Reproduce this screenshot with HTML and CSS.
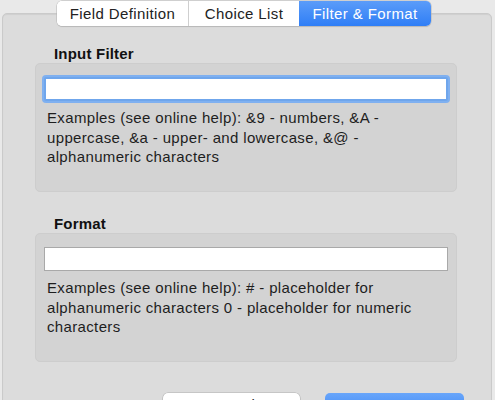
FILE: index.html
```html
<!DOCTYPE html>
<html>
<head>
<meta charset="utf-8">
<link rel="stylesheet" href="styles.css">
</head>
<body>
<div class="window">
  <div class="tabs">
    <div class="tab tab-first">Field Definition</div>
    <div class="tab tab-mid">Choice List</div>
    <div class="tab tab-last tab-active">Filter &amp; Format</div>
  </div>
  <div class="panel">
    <div class="heading">Input Filter</div>
    <div class="group">
      <div class="field field-focus"></div>
      <p class="help">Examples (see online help): &amp;9 - numbers, &amp;A - uppercase, &amp;a - upper- and lowercase, &amp;@ - alphanumeric characters</p>
    </div>
    <div class="heading heading-second">Format</div>
    <div class="group">
      <div class="field"></div>
      <p class="help">Examples (see online help): # - placeholder for alphanumeric characters 0 - placeholder for numeric characters</p>
    </div>
    <div class="buttons">
      <div class="btn btn-cancel">Cancel</div>
      <div class="btn btn-ok">OK</div>
    </div>
  </div>
</div>
</body>
</html>
```

FILE: styles.css
```css
html, body {
  margin: 0;
  padding: 0;
  background: #e9e9e9;
  overflow: hidden;
}
body {
  width: 495px;
  height: 400px;
  font-family: "Liberation Sans", Arial, sans-serif;
  color: #1e1e1e;
}
.window {
  display: flex;
  flex-direction: column;
  padding-top: 1px;
}
.tabs {
  display: flex;
  margin-left: 57px;
  width: 374px;
  height: 25px;
  position: relative;
  z-index: 2;
  border-radius: 5px;
  box-shadow: 0 0 0 0.5px #b5b5b5, 0 1px 1px rgba(0,0,0,0.15);
  overflow: hidden;
  background: #fff;
}
.tab {
  display: flex;
  align-items: center;
  justify-content: center;
  font-size: 15px;
  letter-spacing: 0.4px;
  color: #222;
  background: #fff;
  box-sizing: border-box;
}
.tab-first { width: 132px; border-right: 1px solid #cfcfcf; }
.tab-mid { width: 110px; }
.tab-last { width: 132px; }
.tab-active {
  background: linear-gradient(#5b9cf9, #2f7ef6);
  color: #fff;
}
.panel {
  margin-top: -13px;
  margin-left: 2px;
  width: 490px;
  height: 420px;
  box-sizing: border-box;
  background: #dcdcdc;
  border: 1px solid #cacaca;
  border-radius: 5px;
  box-shadow: inset 0 1px 1px rgba(0,0,0,0.06);
  padding: 31px 0 0 32px;
  display: flex;
  flex-direction: column;
}
.heading {
  font-size: 15px;
  letter-spacing: 0.2px;
  font-weight: bold;
  line-height: 18px;
  margin-left: 19px;
  color: #111;
}
.heading-second {
  margin-top: 23px;
}
.group {
  margin-top: 0px;
  width: 422px;
  height: 129px;
  box-sizing: border-box;
  background: #d3d3d3;
  border: 1px solid #cdcdcd;
  border-radius: 5px;
  padding: 13px 0 0 8px;
}
.field {
  width: 404px;
  height: 24px;
  box-sizing: border-box;
  background: #fff;
  border: 1px solid #a9a9a9;
}
.field-focus {
  border: 2px solid #6fa6ec;
  box-shadow: 0 0 0 2px #7fb0f0;
  border-radius: 2px;
}
.help {
  margin: 7px 0 0 3px;
  font-size: 15px;
  letter-spacing: 0.35px;
  line-height: 19.5px;
  width: 395px;
  color: #1e1e1e;
}
.buttons {
  display: flex;
  margin-top: 31px;
  margin-left: 128px;
  gap: 25px;
}
.btn {
  height: 22px;
  box-sizing: border-box;
  border-radius: 5px;
  font-size: 15px;
  display: flex;
  align-items: center;
  justify-content: center;
}
.btn-cancel {
  width: 137px;
  background: #fff;
  box-shadow: 0 0 0 0.5px #b0b0b0, 0 1px 1px rgba(0,0,0,0.15);
  color: #222;
}
.btn-ok {
  width: 139px;
  background: linear-gradient(#69a6fa, #3a86f7);
  color: #fff;
}
```
